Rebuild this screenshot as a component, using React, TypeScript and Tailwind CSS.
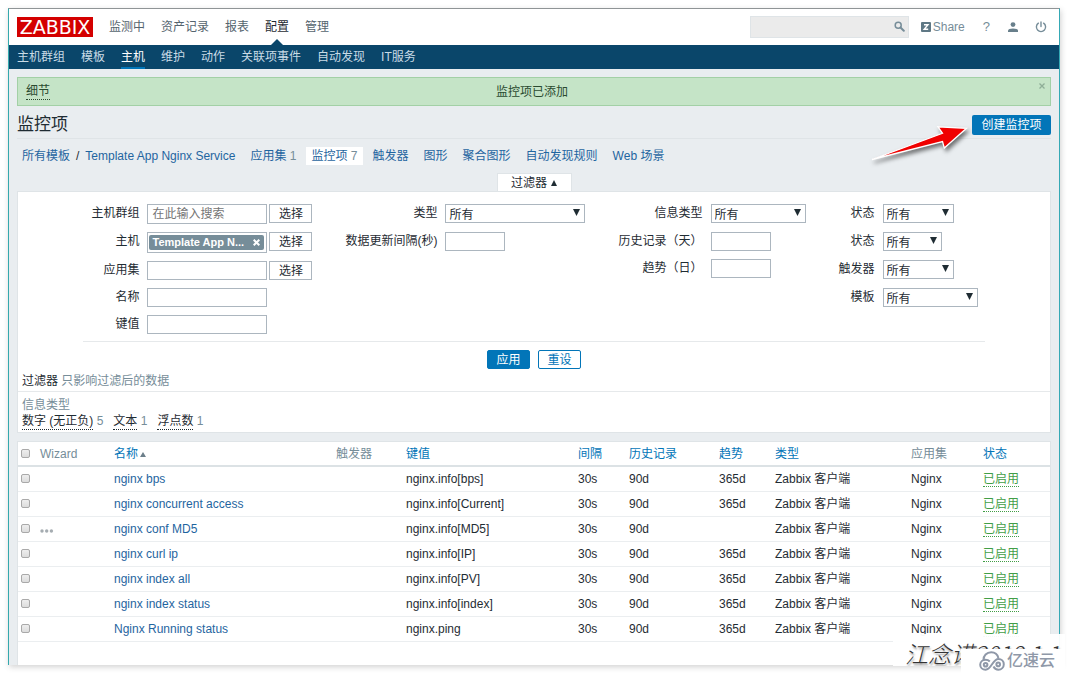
import { useState } from 'react';

const mainMenu = ['监测中', '资产记录', '报表', '配置', '管理'];
const subMenu = ['主机群组', '模板', '主机', '维护', '动作', '关联项事件', '自动发现', 'IT服务'];

const tabs = [
    { label: '应用集', count: 1 },
    { label: '监控项', count: 7 },
    { label: '触发器' },
    { label: '图形' },
    { label: '聚合图形' },
    { label: '自动发现规则' },
    { label: 'Web 场景' },
];

const columns = [
    { label: 'Wizard', width: 'w-[74px]', sortable: false },
    { label: '名称', width: '', sortable: true },
    { label: '触发器', width: 'w-[70px]', sortable: false },
    { label: '键值', width: 'w-[172px]', sortable: true },
    { label: '间隔', width: 'w-[51px]', sortable: true },
    { label: '历史记录', width: 'w-[90px]', sortable: true },
    { label: '趋势', width: 'w-[56px]', sortable: true },
    { label: '类型', width: 'w-[136px]', sortable: true },
    { label: '应用集', width: 'w-[72px]', sortable: false },
    { label: '状态', width: 'w-[67px]', sortable: true },
];

const items = [
    { name: 'nginx bps', itemKey: 'nginx.info[bps]', trends: '365d' },
    { name: 'nginx concurrent access', itemKey: 'nginx.info[Current]', trends: '365d' },
    { name: 'nginx conf MD5', itemKey: 'nginx.info[MD5]', trends: '', wizard: true },
    { name: 'nginx curl ip', itemKey: 'nginx.info[IP]', trends: '365d' },
    { name: 'nginx index all', itemKey: 'nginx.info[PV]', trends: '365d' },
    { name: 'nginx index status', itemKey: 'nginx.info[index]', trends: '365d' },
    { name: 'Nginx Running status', itemKey: 'nginx.ping', trends: '365d' },
];

const inputClass = 'block border border-[#acb6bf] bg-white px-1 text-xs placeholder:text-[#757575] focus:outline-none';
const checkboxClass =
    'block size-[9px] appearance-none rounded-xs border border-[#a9a9a9] bg-linear-to-b from-[#eeeeee] to-[#dcdcdc] checked:bg-[#0275b8]';

const FieldLabel = ({ id, text }: { id: string; text: string }) => (
    <label htmlFor={id} className="h-[19px] text-right leading-[18px] whitespace-nowrap">
        {text}
    </label>
);

const TextField = ({ id, label, width }: { id: string; label: string; width: string }) => (
    <>
        <FieldLabel id={id} text={label} />
        <input id={id} type="text" className={`${inputClass} h-[19px] ${width}`} />
    </>
);

const SelectField = ({ id, label, width }: { id: string; label: string; width: string }) => (
    <>
        <FieldLabel id={id} text={label} />
        <div className={`relative h-5 ${width}`}>
            <select
                id={id}
                className="block h-[19px] w-full appearance-none border border-[#acb6bf] bg-white pt-[3px] pl-[3px] text-xs leading-[14px] focus:outline-none"
            >
                <option>所有</option>
            </select>
            <svg className="pointer-events-none absolute top-[5px] right-[5px]" width="7" height="7" viewBox="0 0 7 7">
                <path d="M0 0h7L3.5 7z" fill="#1f2c33" />
            </svg>
        </div>
    </>
);

const PickButton = () => (
    <button type="button" className="h-[19px] w-[43px] border border-[#acb6bf] bg-white leading-[19px]">
        选择
    </button>
);

const Header = () => (
    <header className="flex h-9 items-center gap-4 bg-white pr-3 pl-2">
        <a href="#" className="flex h-5 w-[76px] items-center justify-center bg-[#d40000] font-['DejaVu_Sans',sans-serif] text-[19px] leading-5 text-white">
            ZABBIX
        </a>
        <nav className="flex flex-1 gap-4 self-stretch leading-9 text-[#55646e]">
            {mainMenu.map((item) => (
                <a key={item} href="#" className={item === '配置' ? 'relative text-[#1f2c33]' : ''}>
                    {item}
                    {item === '配置' && (
                        <span className="absolute bottom-0 left-1/2 -translate-x-1/2 border-x-6 border-b-6 border-x-transparent border-b-[#0a466a]" />
                    )}
                </a>
            ))}
        </nav>
        <div className="flex items-center text-[#768d99]">
            <div className="relative mr-3">
                <input type="text" aria-label="搜索" className="block h-[22px] w-[159px] border border-[#dfe4e7] bg-[#ebebeb] px-1" />
                <button type="button" aria-label="搜索" className="absolute top-[5px] right-1">
                    <svg width="11" height="11" viewBox="0 0 11 11" fill="none" stroke="#768d99">
                        <circle cx="4.2" cy="4.2" r="3" strokeWidth="1.5" />
                        <path d="M6.5 6.5l3.3 3.3" strokeWidth="2" strokeLinecap="round" />
                    </svg>
                </button>
            </div>
            <a href="#" className="mr-[18px] flex items-center gap-[2px]">
                <svg width="10" height="10" viewBox="0 0 10 10">
                    <rect width="10" height="10" rx="1" fill="#5f7885" />
                    <path d="M3 2.7h4L3.2 7.3h4" fill="none" stroke="#fff" strokeWidth="1.4" />
                </svg>
                Share
            </a>
            <a href="#" className="mr-[18px] text-[13px]">?</a>
            <a href="#" aria-label="用户" className="mr-[17px]">
                <svg width="10" height="10" viewBox="0 0 10 10" fill="#687f8b">
                    <circle cx="5" cy="2.6" r="2.4" />
                    <path d="M0 10V8.6C0 7.2 2.2 6.4 5 6.4s5 .8 5 2.2V10z" />
                </svg>
            </a>
            <a href="#" aria-label="退出">
                <svg width="12" height="12" viewBox="0 0 12 12" fill="none" stroke="#768d99" strokeWidth="1.4" strokeLinecap="round">
                    <path d="M3.4 2.2a4.6 4.6 0 1 0 5.2 0M6 1v4.5" />
                </svg>
            </a>
        </div>
    </header>
);

const Filter = () => (
    <form className="border border-[#dfe4e7] bg-white" onSubmit={(e) => e.preventDefault()}>
        <div className="mx-auto w-fit border-b border-[#e6e9eb] pt-3 pr-[7px] pb-[7px] pl-2">
            <div className="flex items-start gap-[33px]">
                <div className="grid grid-cols-[auto_auto] gap-2">
                    <FieldLabel id="groups" text="主机群组" />
                    <div className="flex items-start gap-[2px]">
                        <input id="groups" type="text" placeholder="在此输入搜索" className={`${inputClass} h-5 w-[120px]`} />
                        <PickButton />
                    </div>
                    <FieldLabel id="hosts" text="主机" />
                    <div className="flex items-start gap-[2px]">
                        <div className="flex h-[21px] w-[120px] items-center border border-[#acb6bf] px-px">
                            <span className="flex h-[15px] w-[115px] flex-none items-center justify-between rounded-xs bg-[#768d99] pr-1 pl-[3px] text-[11px] font-bold leading-[15px] text-white">
                                Template App N...
                                <button type="button" aria-label="移除">
                                    <svg width="7" height="7" viewBox="0 0 7 7" stroke="#fff" strokeWidth="2">
                                        <path d="M.7.7l5.6 5.6M6.3.7L.7 6.3" />
                                    </svg>
                                </button>
                            </span>
                            <input id="hosts" type="text" className="w-0 min-w-0 flex-1 focus:outline-none" />
                        </div>
                        <PickButton />
                    </div>
                    <FieldLabel id="application" text="应用集" />
                    <div className="flex items-start gap-[2px]">
                        <input id="application" type="text" className={`${inputClass} h-[19px] w-[120px]`} />
                        <PickButton />
                    </div>
                    <TextField id="name" label="名称" width="w-[120px]" />
                    <TextField id="key" label="键值" width="w-[120px]" />
                </div>
                <div className="grid grid-cols-[auto_auto] gap-2">
                    <SelectField id="type" label="类型" width="w-[140px]" />
                    <TextField id="delay" label="数据更新间隔(秒)" width="w-[60px]" />
                </div>
                <div className="grid grid-cols-[auto_auto] gap-2">
                    <SelectField id="value-type" label="信息类型" width="w-[95px]" />
                    <TextField id="history" label="历史记录（天）" width="w-[60px]" />
                    <TextField id="trends" label="趋势（日）" width="w-[60px]" />
                </div>
                <div className="grid grid-cols-[auto_auto] gap-2">
                    <SelectField id="state" label="状态" width="w-[71px]" />
                    <SelectField id="status" label="状态" width="w-[59px]" />
                    <SelectField id="with-triggers" label="触发器" width="w-[71px]" />
                    <SelectField id="templated" label="模板" width="w-[95px]" />
                </div>
            </div>
        </div>
        <div className="mt-2 flex justify-center gap-2">
            <button type="submit" className="h-[19px] w-[43px] rounded-xs border border-[#0275b8] bg-[#0275b8] leading-[19px] text-white">
                应用
            </button>
            <button type="reset" className="h-[19px] w-[43px] rounded-xs border border-[#0275b8] bg-white leading-[19px] text-[#0275b8]">
                重设
            </button>
        </div>
        <p className="mt-1 border-b border-[#e6e9eb] px-1 pb-[2px] leading-4">
            过滤器 <span className="text-[#768d99]">只影响过滤后的数据</span>
        </p>
        <div className="px-1 pt-[5px] pb-[2px]">
            <h3 className="leading-4 text-[#768d99]">信息类型</h3>
            <div className="flex gap-[10px] leading-4 text-[#768d99]">
                {[['数字 (无正负)', 5], ['文本', 1], ['浮点数', 1]].map(([label, count]) => (
                    <span key={label}>
                        <button type="button" className="h-4 border-b border-dotted border-[#1f2c33] leading-[15px] text-[#1f2c33]">
                            {label}
                        </button>{' '}
                        {count}
                    </span>
                ))}
            </div>
        </div>
    </form>
);

const ItemTable = () => (
    <div className="mt-2 border border-b-0 border-[#dfe4e7] bg-white pb-[23px]">
        <table className="w-full table-fixed border-collapse text-left">
            <thead>
                <tr className="h-6 border-b-2 border-[#dce2e5]">
                    <th className="w-[22px] pl-[3px]">
                        <input type="checkbox" aria-label="全选" className={checkboxClass} />
                    </th>
                    {columns.map(({ label, width, sortable }) => (
                        <th key={label} className={`font-normal leading-4 text-[#768d99] ${width}`}>
                            {sortable ? <a href="#" className="text-[#0275b8]">{label}</a> : label}
                            {label === '名称' && (
                                <svg className="ml-0.5 inline" width="6" height="5" viewBox="0 0 6 5">
                                    <path d="M0 5h6L3 0z" fill="#6c7f8a" />
                                </svg>
                            )}
                        </th>
                    ))}
                </tr>
            </thead>
            <tbody>
                {items.map((item) => (
                    <tr key={item.name} className="h-[25px] border-b border-[#ebeef0] leading-4">
                        <td className="pl-[3px]">
                            <input type="checkbox" aria-label={item.name} className={checkboxClass} />
                        </td>
                        <td>
                            {item.wizard && (
                                <button type="button" aria-label="菜单" className="block pt-1">
                                    <svg width="14" height="4" viewBox="0 0 14 4" fill="#a5acb1">
                                        <circle cx="2" cy="2" r="1.7" />
                                        <circle cx="6.7" cy="2" r="1.7" />
                                        <circle cx="11.4" cy="2" r="1.7" />
                                    </svg>
                                </button>
                            )}
                        </td>
                        <td><a href="#" className="text-[#1f65a0]">{item.name}</a></td>
                        <td></td>
                        <td>{item.itemKey}</td>
                        <td>30s</td>
                        <td>90d</td>
                        <td>{item.trends}</td>
                        <td>Zabbix 客户端</td>
                        <td>Nginx</td>
                        <td>
                            <a href="#" className="block h-4 w-fit border-b border-dotted border-[#429e47] leading-[17px] text-[#429e47]">已启用</a>
                        </td>
                    </tr>
                ))}
            </tbody>
        </table>
    </div>
);

const Watermark = () => (
    <div className="absolute right-[5px] bottom-0 h-10 w-[172px]">
        <div className="h-8 overflow-hidden bg-white/95 pl-3 font-['Noto_Sans_CJK_SC',sans-serif] text-[23px] leading-[38px] font-light whitespace-nowrap text-[#333] italic text-shadow-[1px_2px_2px_#999]">
            江念诺2019.1.1
        </div>
        <div className="absolute right-0 bottom-0 flex h-[25px] w-[104px] items-center gap-[2px] bg-white pl-[18px] text-base font-medium whitespace-nowrap text-[#8f98a8]">
            <svg width="26" height="20" viewBox="0 0 26 20" fill="none" stroke="#8f98a8" strokeWidth="2">
                <path d="M4.500 9.200C4.200 4.600 7.800 1.200 12.200 1.200c3.800 0 6.400 2.300 7.200 5.800" />
                <path d="M14.500 15.500c1 2 2.700 3.200 4.900 3.200 3.100 0 5.400-2.400 5.400-5.400S22.500 8 19.400 8C13.600 8 12.500 18.700 6.600 18.700c-3 0-5.400-2.200-5.400-5s2.400-4.900 5.400-4.900c1.900 0 3.200.7 4.200 1.700" />
                <circle cx="6.600" cy="13.800" r="1.800" />
                <circle cx="19.200" cy="13.400" r="1.800" />
            </svg>
            亿速云
        </div>
    </div>
);

const App = () => {
    const [showMessage, setShowMessage] = useState(true);

    return (
        <div className="relative bg-white pt-2 pr-[10px] pb-[9px] pl-2 font-['Liberation_Sans','Noto_Sans_CJK_SC',sans-serif] text-xs text-[#1f2c33]">
            <div className="border-x border-t border-t-[#8f9496] border-r-[#35a9b5] border-l-[#35a9ad] bg-[#e9edf0] shadow-[1px_2px_6px_#0000002e]">
                <Header />
                <nav className="flex h-6 gap-4 bg-[#0a466a] pl-2 leading-6 text-[#c9dbe6]">
                    {subMenu.map((item) => (
                        <a key={item} href="#" className={item === '主机' ? 'border-b-2 border-[#0275b8] text-white' : ''}>
                            {item}
                        </a>
                    ))}
                </nav>

                <main className="px-2 pt-2">
                    {showMessage && (
                        <div className="relative flex h-[29px] items-center justify-center border border-[#a3d0a6] bg-[#c5e4c7] pr-1 text-[#2a4a30]">
                            <button type="button" className="absolute top-1 left-2 h-[18px] border-b border-dotted border-[#2a4a30] leading-[18px]">
                                细节
                            </button>
                            <span className="leading-4">监控项已添加</span>
                            <button type="button" aria-label="关闭" className="absolute top-[5px] right-[5px]" onClick={() => setShowMessage(false)}>
                                <svg width="6" height="6" viewBox="0 0 6 6" stroke="#8fae97" strokeWidth="1.300">
                                    <path d="M.5.5l5 5M5.500.5l-5 5" />
                                </svg>
                            </button>
                        </div>
                    )}

                    <div className="relative flex h-[33px] items-center justify-between border-b border-[#dfe4e7] pt-1.5">
                        <h1 className="text-[17px] leading-6">监控项</h1>
                        <button type="button" className="h-5 w-[79px] rounded-xs bg-[#0275b8] leading-[21px] text-white">
                            创建监控项
                        </button>
                        {/* red pointer towards the create button */}
                        <svg className="pointer-events-none absolute top-4 right-[79px]" width="104" height="46" viewBox="0 0 104 46">
                            <path
                                d="M4 37.500L74.500 11.300 70 4.800 98.500 6.300 76.300 26 74.500 19.500z"
                                fill="#f00000"
                                stroke="#fff"
                                strokeWidth="1.300"
                                className="drop-shadow-[2px_3px_2px_#0008]"
                            />
                        </svg>
                    </div>

                    <nav className="mt-2 flex h-[18px] items-center gap-[5px] leading-[18px] whitespace-nowrap text-[#1f65a0]">
                        <a href="#" className="pl-[5px]">所有模板</a>
                        <span className="px-px text-[#1f2c33]">/</span>
                        <a href="#" className="pr-[5px]">Template App Nginx Service</a>
                        {tabs.map(({ label, count }) => (
                            <a key={label} href="#" className={label === '监控项' ? 'bg-white px-[5px]' : 'px-[5px]'}>
                                {label}
                                {count && <span className="text-[#768d99]"> {count}</span>}
                            </a>
                        ))}
                    </nav>

                    <div className="mt-2 flex justify-center">
                        <button type="button" className="flex h-[18px] w-[75px] items-center justify-center gap-1 border border-b-0 border-[#dfe4e7] bg-white leading-4">
                            过滤器
                            <svg width="6" height="6" viewBox="0 0 6 6">
                                <path d="M0 6h6L3 0z" fill="#1f2c33" />
                            </svg>
                        </button>
                    </div>
                    <Filter />
                    <ItemTable />
                </main>
            </div>
            <Watermark />
        </div>
    );
};

export default App;
